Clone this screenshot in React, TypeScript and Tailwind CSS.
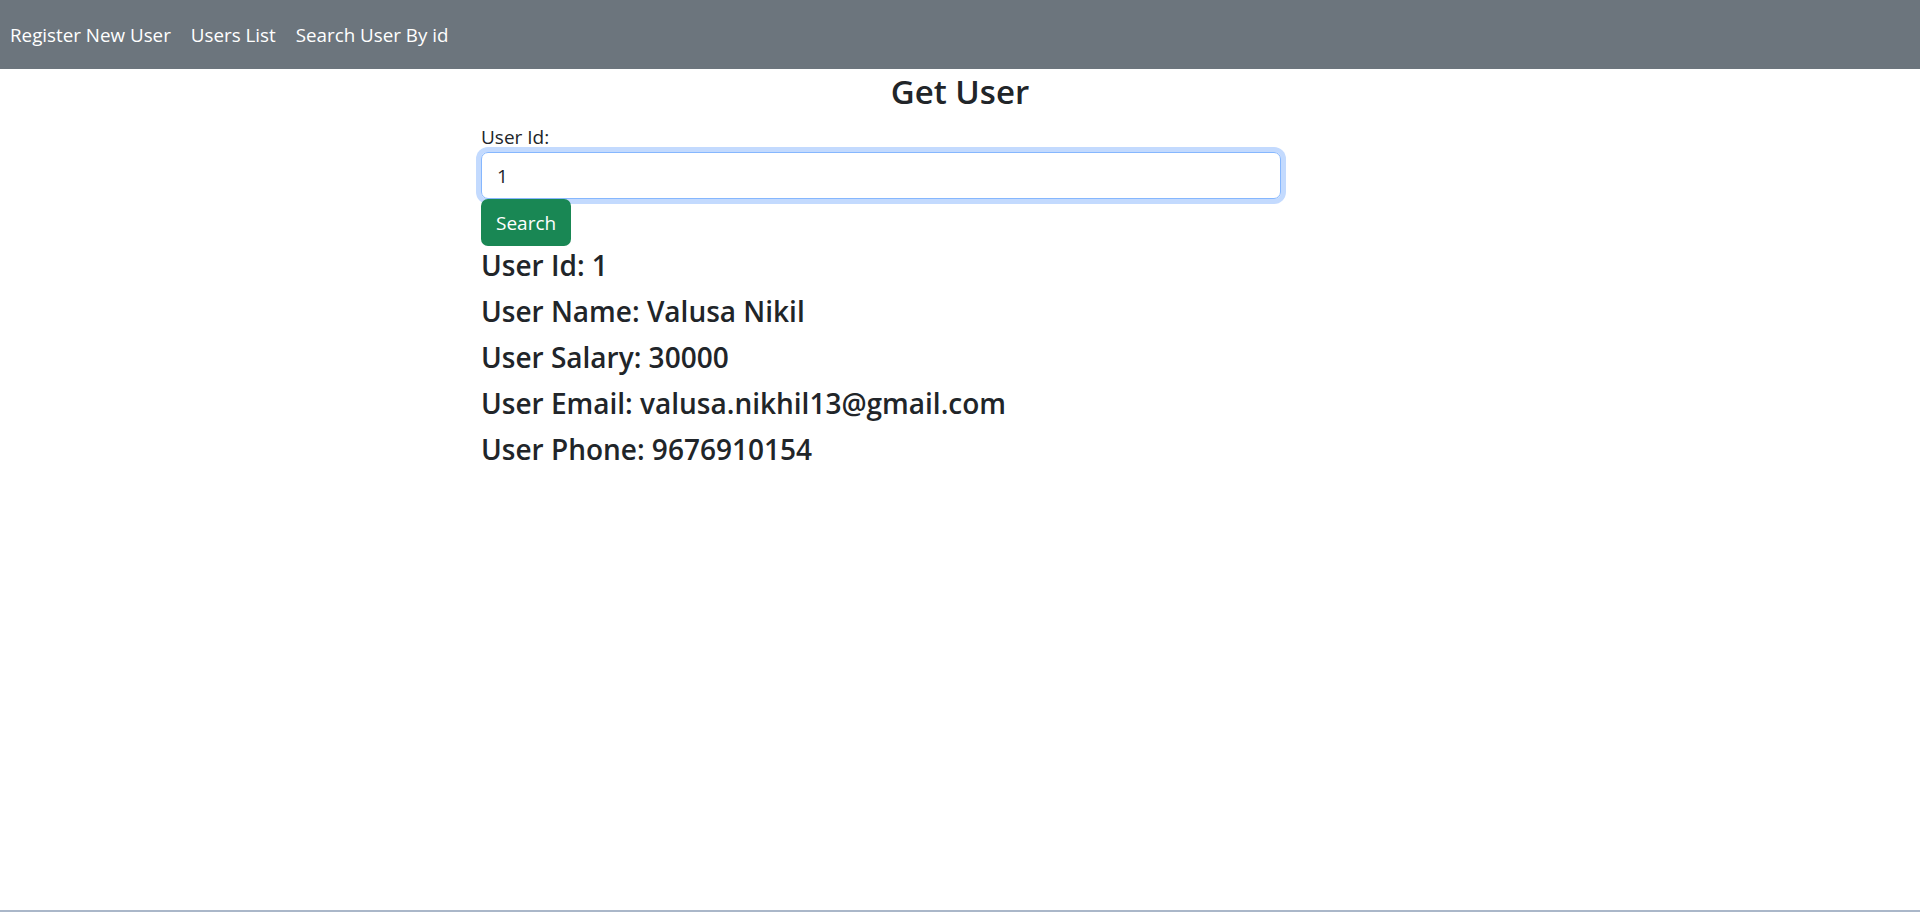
export default function App() {
  const font = { fontFamily: '"Open Sans", "Noto Sans", sans-serif' };
  return (
    <div className="min-h-[912px] flex flex-col bg-white text-[#212529]" style={font}>
      {/* Navbar */}
      <nav className="h-[69px] pt-[1px] bg-[#6c757d] flex items-center">
        <a className="px-[10px] text-[18.8px] text-white">Register New User</a>
        <a className="px-[10px] text-[18.8px] text-white">Users List</a>
        <a className="px-[10px] text-[18.8px] text-white">Search User By id</a>
      </nav>

      <main className="flex-1 pt-[2px]">
        <h3 className="mt-[1px] text-center text-[33px] font-semibold leading-[1.2]">Get User</h3>

        <div className="pl-[481px]">
          <label className="block mt-[14px] text-[19px] leading-[1.2]">User Id:</label>
          <input
            className="mt-[4px] block w-[800px] h-[47px] rounded-[7px] border border-[#86b7fe] px-[15px] text-[19px] text-[#212529] outline-none shadow-[0_0_0_5px_#c3dafe]"
            defaultValue="1"
          />
          <button className="block h-[47px] px-[15px] rounded-[7px] bg-[#198754] text-white text-[19px]">
            Search
          </button>

          <div className="mt-[1px]">
            <h4 className="text-[28px] font-semibold leading-[36px] mb-[10px]">User Id: 1</h4>
            <h4 className="text-[28px] font-semibold leading-[36px] mb-[10px]">User Name: Valusa Nikil</h4>
            <h4 className="text-[28px] font-semibold leading-[36px] mb-[10px]">User Salary: 30000</h4>
            <h4 className="text-[28px] font-semibold leading-[36px] mb-[10px]">User Email: valusa.nikhil13@gmail.com</h4>
            <h4 className="text-[28px] font-semibold leading-[36px] mb-[10px]">User Phone: 9676910154</h4>
          </div>
        </div>
      </main>

      <div className="h-[2px] bg-[#aab7c9]" />
    </div>
  );
}
